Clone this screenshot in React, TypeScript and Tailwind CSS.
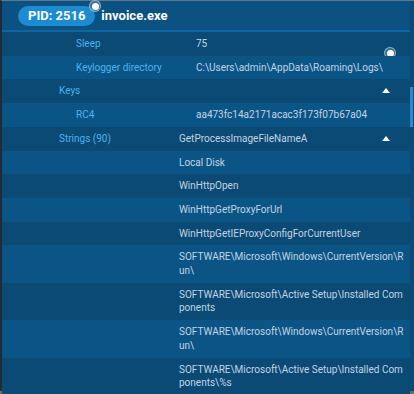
import React from "react";

type Row = {
  label?: string;
  value: string;
  level: 1 | 2;
  arrow?: boolean;
};

const rows: Row[] = [
  { label: "Sleep", value: "75", level: 2 },
  { label: "Keylogger directory", value: "C:\\Users\\admin\\AppData\\Roaming\\Logs\\", level: 2 },
  { label: "Keys", value: "", level: 1, arrow: true },
  { label: "RC4", value: "aa473fc14a2171acac3f173f07b67a04", level: 2 },
  { label: "Strings (90)", value: "GetProcessImageFileNameA", level: 1, arrow: true },
  { value: "Local Disk", level: 1 },
  { value: "WinHttpOpen", level: 1 },
  { value: "WinHttpGetProxyForUrl", level: 1 },
  { value: "WinHttpGetIEProxyConfigForCurrentUser", level: 1 },
  { value: "SOFTWARE\\Microsoft\\Windows\\CurrentVersion\\Run\\", level: 1 },
  { value: "SOFTWARE\\Microsoft\\Active Setup\\Installed Components", level: 1 },
  { value: "SOFTWARE\\Microsoft\\Windows\\CurrentVersion\\Run\\", level: 1 },
  { value: "SOFTWARE\\Microsoft\\Active Setup\\Installed Components\\%s", level: 1 },
];

function Dot() {
  return (
    <span className="flex h-[12px] w-[12px] items-center justify-center rounded-full border border-[#b9cad8]/70 bg-[#6f93b0]/50">
      <span className="h-[7px] w-[7px] rounded-full bg-white" />
    </span>
  );
}

export default function App() {
  return (
    <div
      className="flex h-[394px] w-[414px] flex-col overflow-hidden bg-[#0a4a75] text-[10px]"
      style={{ fontFamily: "Roboto, 'Liberation Sans', sans-serif" }}
    >
      <div className="flex min-h-0 flex-1 border-t border-[#5f7688] border-l-2 border-l-[#1b2c3b]">
        <div className="relative flex min-w-0 flex-1 flex-col">
          <div className="relative flex h-[31px] shrink-0 items-center gap-[6px] border-b-2 border-[#0e66a2] bg-[#0b5283] pl-[16px]">
            <span className="rounded-full bg-[#1c8bd2] px-[10px] py-[2px] text-[13px] font-bold leading-[16px] text-white">
              PID: 2516
            </span>
            <span className="text-[13px] font-bold leading-[16px] text-white">invoice.exe</span>
            <span className="absolute -top-[1px] left-[87px]">
              <Dot />
            </span>
          </div>

          {rows.map((r, i) => (
            <div
              key={i}
              className={`relative flex shrink-0 py-[5px] leading-[13.7px] ${i % 2 === 0 ? "bg-[#0a4a75]" : "bg-[#0b5586]"}`}
            >
              <div
                className={`shrink-0 text-[#4db2ef] ${r.level === 2 ? "w-[194px] pl-[74px]" : "w-[177px] pl-[57px]"}`}
              >
                {r.label}
              </div>
              <div className="w-[226px] break-all text-[#c3d4e2]">{r.value}</div>
              {r.arrow && (
                <span className="absolute right-[20px] top-[9px] h-0 w-0 border-x-[4px] border-b-[5px] border-x-transparent border-b-white" />
              )}
              {i === 0 && (
                <span className="absolute right-[14px] top-[15px]">
                  <Dot />
                </span>
              )}
            </div>
          ))}
        </div>
        <div className="w-[4px] shrink-0 bg-[#0a4a75] pt-[86px]">
          <div className="h-[40px] w-[3px] bg-[#2a8ad0]" />
        </div>
      </div>
      <div className="h-[4px] shrink-0 border-t border-[#333] bg-[#6b6b6b]" />
    </div>
  );
}
